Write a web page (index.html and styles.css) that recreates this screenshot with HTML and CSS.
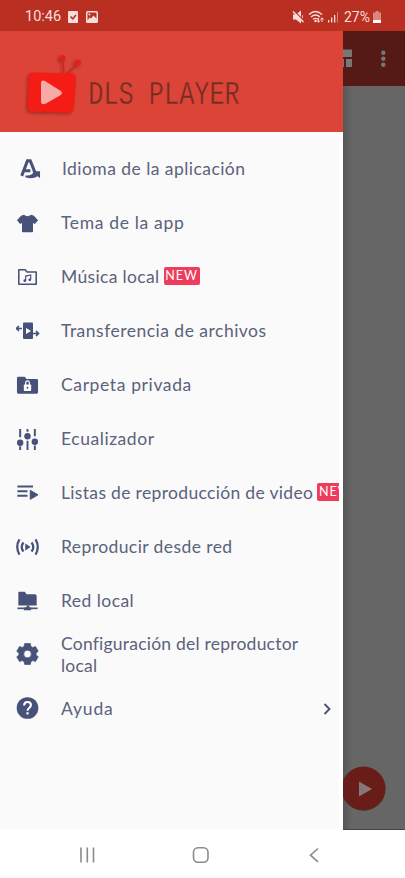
FILE: index.html
```html
<!DOCTYPE html>
<html lang="es">
<head>
<meta charset="utf-8">
<title>DLS Player</title>
<link rel="stylesheet" href="styles.css">
</head>
<body>
<div class="screen">
  <header class="status">
    <span class="clock">10:46</span>
    <svg class="status-left" width="34" height="14" viewBox="0 0 34 14">
      <rect x="2" y="1" width="10" height="12" rx="1" fill="#f8dedb"/>
      <path d="M4.500 6.500l2.200 2.300L10 5" fill="none" stroke="#b73024" stroke-width="1.500"/>
      <rect x="20" y="1" width="12" height="12" rx="1.500" fill="#f8dedb"/>
      <path d="M21.500 10.500v-8h9v6l-3-3-2.500 3-1.500-1z" fill="#b73024"/>
      <circle cx="23.500" cy="4.600" r="1" fill="#f8dedb"/>
    </svg>
    <span class="grow"></span>
    <svg class="status-right" width="48" height="16" viewBox="0 0 48 16">
      <g fill="#f8dedb"><path d="M1 5.500h3l5-4v13L4 10.500H1z"/><path d="M10 5.500q1.700 2 0 5z"/></g>
      <path d="M1.500 1.500l11 11" stroke="#b73024" stroke-width="1.500"/>
      <path d="M1 2.500l10.500 10.500" stroke="#f8dedb" stroke-width="1.500"/>
      <g fill="none" stroke="#f8dedb" stroke-width="1.300"><path d="M17 5.500q6.500-6 13 0M19 8q4.500-4 9 0M21 10.300q2.500-2 5 0"/><path d="M26.500 9v4M25 11.500l1.500 1.800 1.500-1.800M30 13v-4M28.500 10.500l1.500-1.700 1.500 1.700" stroke-width="1"/></g>
      <circle cx="23.500" cy="12" r="1.200" fill="#f8dedb"/>
      <g fill="#f8dedb"><path d="M36 11h1.300v2.500H36zM39 8.500h1.300v5H39zM42 6h1.300v7.500H42z"/><path d="M45 3h1v10.500h-1z" opacity=".45"/></g>
    </svg>
    <span class="battery-text">27%</span>
    <svg class="battery" width="8" height="14" viewBox="0 0 8 14"><path d="M2.500 1h3v1.500H8V10H0V2.500h2.500z" fill="#db877f"/><path d="M0 10h8v3H0z" fill="#fff"/></svg>
  </header>
  <main class="stage">
    <aside class="drawer">
      <div class="brand">
        <svg width="343" height="101" viewBox="0 31 343 101">
          <defs><filter id="soft" x="-20%" y="-20%" width="140%" height="150%"><feDropShadow dx="-1.500" dy="1.500" stdDeviation="1.500" flood-color="#651712" flood-opacity=".55"/></filter></defs>
          <g filter="url(#soft)">
            <path d="M64 74l-1-17M67 74l11-11" stroke="#c92820" stroke-width="1.300"/>
            <circle cx="62.500" cy="58" r="3" fill="#d9231f"/><circle cx="78" cy="62.500" r="3" fill="#df241f"/>
            <path d="M33 72.500l38 1q5 0 5 5l-2 28q0 6-6 6l-35-1q-5 0-5-5l1-29q0-5 4-5z" fill="#f51b16"/>
          </g>
          <path d="M41 83q0-3.500 4-2l15 9.500q4 2.500 0 5L46 103.500q-5 2-5-2z" fill="#f8aaa7"/>
          <text class="brand-name" transform="translate(88.300 104) scale(.765 1)">DLS PLAYER</text>
        </svg>
      </div>
      <nav class="menu">
        <a class="row first"><svg viewBox="0 0 24 24"><path d="M3.500 19.500L9.800 3h3L18 16M6 14h7" fill="none" stroke="#485177" stroke-width="3.300"/><path d="M7.500 19q7 1 9-4l-2.500-.500h9.500V22l-2.500-2q-6 3.500-13.500 1z" fill="#485177"/></svg><span>Idioma de la aplicación</span></a>
        <a class="row tema"><svg viewBox="0 0 24 24"><path d="M8 3q4 3 8 0l3 1 4.500 5-3.500 4-2-1v9q0 1-1 1H7q-1 0-1-1v-9l-2 1L.500 9 5 4z"/></svg><span>Tema de la app</span></a>
        <a class="row musica"><svg viewBox="0 0 24 24"><path d="M2.500 4h7l2 2.500h10v13.500h-19z" fill="none" stroke="#485177" stroke-width="1.700" stroke-linejoin="round"/><path d="M10 16v-5l5.500-1.200v5" fill="none" stroke="#485177" stroke-width="1.300"/><circle cx="9" cy="16" r="1.500"/><circle cx="14.500" cy="15" r="1.500"/></svg><span>Música local</span><b class="badge">NEW</b></a>
        <a class="row transfer"><svg class="wide" viewBox="0 0 25 22"><rect x="8" y="2.500" width="10" height="16.500" rx="1"/><path d="M11 8l5 3-5 3z" fill="#fff"/><path d="M7 8.500H2M4 6L1.500 8.500 4 11M18 13.500h5.500M21 11l2.500 2.500L21 16" fill="none" stroke="#485177" stroke-width="1.700"/></svg><span>Transferencia de archivos</span></a>
        <a class="row carpeta"><svg viewBox="0 0 24 24"><path d="M2 3h7l2 2.500h11q1.500 0 1.500 1.500v13q0 1.500-1.500 1.500H2Q.500 21.500.500 20V4.500Q.500 3 2 3z"/><rect x="8" y="11.500" width="8" height="7" rx=".800" fill="#fff"/><path d="M10 12V9.500q0-2 2-2t2 2V12" fill="none" stroke="#fff" stroke-width="1.300"/><circle cx="12" cy="15" r="1"/></svg><span>Carpeta privada</span></a>
        <a class="row ecualizador"><svg viewBox="0 0 24 24"><path d="M4 1v9M4 20v4M12 1v3M12 14v10M20 1v8M20 19v5" stroke="#485177" stroke-width="2.100"/><circle cx="4" cy="16" r="3.500"/><circle cx="12" cy="9" r="3.500"/><circle cx="20" cy="15" r="3.500"/></svg><span>Ecualizador</span></a>
        <a class="row listas"><svg viewBox="0 0 24 24"><path d="M1 5h17M1 10h11M1 15h11" stroke="#485177" stroke-width="2.200"/><path d="M15 9l8.500 5-8.500 5z" stroke="#485177" stroke-linejoin="round"/></svg><span>Listas de reproducción de video</span><b class="badge">NEW</b></a>
        <a class="row reproducir"><svg class="wide" viewBox="0 0 28 24"><path d="M5 3.500q-5 8.500 0 17M23 3.500q5 8.500 0 17M9.500 7q-4 5 0 10M18.500 7q4 5 0 10" fill="none" stroke="#485177" stroke-width="2.500"/><path d="M11.500 8l6 4-6 4z"/></svg><span>Reproducir desde red</span></a>
        <a class="row red"><svg viewBox="0 0 24 24"><path d="M3 2h6l2 2.500h9q2 0 2 2V17H2V3q0-1 1-1z"/><path d="M1 20h22" stroke="#485177" stroke-width="1.800"/><path d="M11 17h3v2h2v3H8v-3h3z"/></svg><span>Red local</span></a>
        <a class="row double"><svg viewBox="0 0 24 24"><path stroke="#485177" stroke-width=".8" stroke-linejoin="round" fill-rule="evenodd" d="M9 .500h6l.7 3.200 2 1.200 3-1 3 5.100-2.400 2.100v1.900l2.400 2.100-3 5.100-3-1-2 1.200-.7 3.100H9l-.7-3.100-2-1.200-3 1-3-5.100 2.400-2.100v-1.900L.300 9l3-5.100 3 1 2-1.200zM12 7.800a4.200 4.200 0 100 8.400 4.200 4.200 0 000-8.400z"/></svg><span>Configuración del reproductor<br>local</span></a>
        <a class="row ayuda"><svg viewBox="0 0 24 24"><circle cx="12" cy="12" r="11.800"/><path d="M8.300 9.300Q8.500 5.500 12 5.500q3.700 0 3.700 3.300 0 1.700-1.900 3.200-1.800 1.300-1.800 3" fill="none" stroke="#fff" stroke-width="2.300"/><rect x="10.800" y="16.600" width="2.400" height="2.400" fill="#fff"/></svg><span>Ayuda</span><svg class="chevron" viewBox="0 0 8 12"><path d="M1.500 1l5 5-5 5" fill="none" stroke="#485177" stroke-width="1.900"/></svg></a>
      </nav>
    </aside>
    <section class="behind">
      <div class="appbar"><svg width="62" height="55" viewBox="343 31 62 55"><path fill="#777" d="M343 49.500h9v7.500h-9zM343 59h1v8h-1zM346 59h6v8h-6z"/><g fill="#777"><circle cx="383.300" cy="52.700" r="2.200"/><circle cx="383.300" cy="58.700" r="2.200"/><circle cx="383.300" cy="64.700" r="2.200"/></g></svg></div>
      <div class="content"><svg width="62" height="60" viewBox="343 760 62 60"><circle cx="363.500" cy="790" r="22" fill="#4b3a3a" opacity=".5"/><circle cx="363.500" cy="789.500" r="22" fill="#691d18"/><path d="M359 782.500l13 7.500-13 7.500z" fill="#85777b"/></svg></div>
    </section>
  </main>
  <footer class="nav">
    <svg width="405" height="48" viewBox="0 830 405 48" fill="none" stroke="#8b8b8b" stroke-width="1.600"><path d="M81 847.500v15M87.300 847.500v15M93.500 847.500v15"/><rect x="193.500" y="847.800" width="14.500" height="14.500" rx="4.500"/><path d="M318 848.500l-7.500 6.700 7.500 6.700"/></svg>
  </footer>
</div>
</body>
</html>
```
FILE: styles.css
```css
* { box-sizing: border-box; }
body { margin: 0; background: #fff; font-family: Lato, "Liberation Sans", sans-serif; }
.screen { width: 405px; height: 878px; display: flex; flex-direction: column; overflow: hidden; }
svg { display: block; flex: none; }
.status { height: 31px; background: #b93022; display: flex; align-items: center; padding: 2px 24px 0 25px; color: #f8dedb; font: 14.5px Roboto, sans-serif; }
.clock { width: 41px; }
.grow { flex: 1; }
.status-right { margin-right: 4px; }
.battery-text { font-size: 14px; width: 29px; }
.stage { height: 799px; display: flex; }
.drawer { width: 343px; background: linear-gradient(90deg, #fafafa 338px, #fff 340px); }
.brand { height: 101px; background: #dc4438; overflow: hidden; }
.brand-name { font: 33px "Liberation Mono", monospace; fill: #702d24; stroke: #dc4438; stroke-width: .5px; }
.menu { padding: 10px 4px 0 16px; }
.row { height: 54px; display: flex; align-items: center; color: #5b627b; font-size: 17.5px; letter-spacing: .45px; white-space: nowrap; overflow: hidden; }
.row > span { padding-bottom: 1px; }
.row > svg { width: 23px; height: 22px; margin-right: 22px; fill: #485177; }
.row > svg.wide { width: 25px; margin-left: -1px; margin-right: 21px; }
.row.first > svg { margin-left: 2px; margin-right: 21px; }
.row > svg.chevron { width: 8px; height: 12px; margin: 0 8px 0 auto; }
.row.tema { letter-spacing: .66px; }
.row.musica { letter-spacing: .35px; }
.row.transfer { letter-spacing: .49px; }
.row.carpeta { letter-spacing: .62px; }
.row.ecualizador { letter-spacing: .55px; }
.row.listas { letter-spacing: .33px; }
.row.reproducir { letter-spacing: .42px; }
.row.double { letter-spacing: .22px; line-height: 22px; }
.row.double > svg { margin-bottom: 2px; }
.row.double > span { padding-bottom: 0; }
.row.ayuda { letter-spacing: .85px; }
.row.ayuda > svg { margin-bottom: 2px; }
.row.ayuda > svg.chevron { margin-bottom: 1px; }
.badge { flex: none; margin: 0 0 2px 4px; width: 36px; height: 18px; border-radius: 2px; background: #ed3c5c; color: #fff; font-size: 12.5px; font-weight: 400; line-height: 18px; letter-spacing: 1px; text-align: center; }
.behind { width: 62px; background: #666; display: flex; flex-direction: column; }
.appbar { height: 55px; background: #561a16; }
.content { flex: 1; display: flex; align-items: flex-end; padding-bottom: 10px; border-bottom: 1px solid #444; background: linear-gradient(90deg, #575757, #666 9px); }
.nav { height: 48px; background: #fff; }
```
